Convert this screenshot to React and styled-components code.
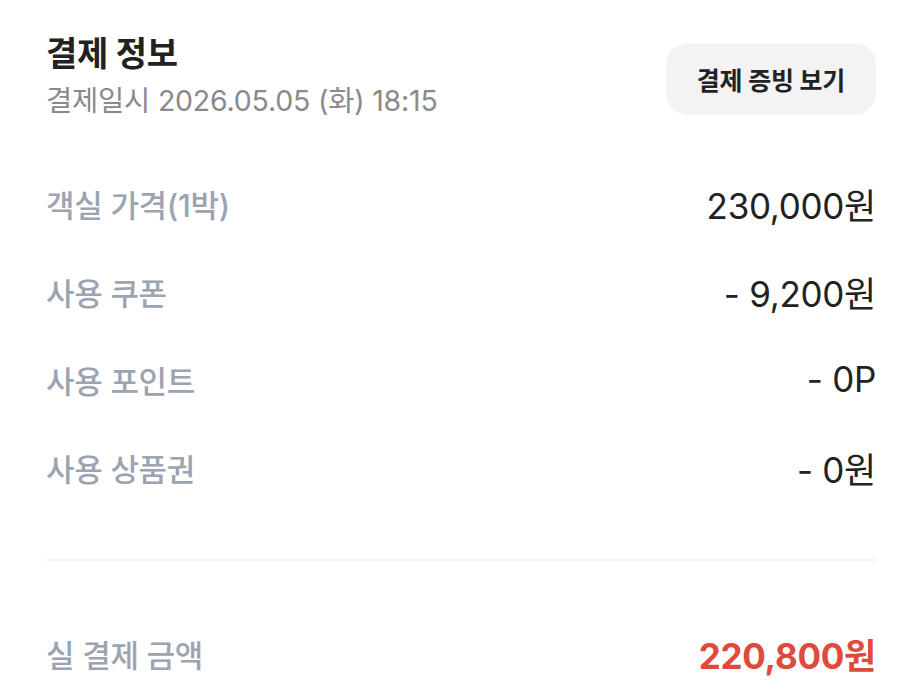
import React from "react";
import styled, { createGlobalStyle } from "styled-components";

const Global = createGlobalStyle`
  html, body { margin: 0; padding: 0; background: #fff; }
  body { font-family: "Inter", "Noto Sans CJK KR", sans-serif; -webkit-font-smoothing: antialiased; }
`;

const Page = styled.div`
  width: 900px;
  box-sizing: border-box;
  padding: 32px 24px 0 46px;
`;

const Header = styled.div`
  display: flex;
  justify-content: space-between;
  align-items: center;
`;

const TitleBlock = styled.div`
  display: flex;
  flex-direction: column;
  gap: 8px;
`;

const Title = styled.h1`
  margin: 0;
  font-size: 34px;
  line-height: 44px;
  font-weight: 700;
  color: #222;
  letter-spacing: -0.3px;
`;

const Sub = styled.div`
  font-size: 28.5px;
  line-height: 34px;
  color: #8a8a8a;
  font-weight: 400;
  letter-spacing: -0.2px;
`;

const Button = styled.button`
  height: 72px;
  margin-top: 8px;
  padding: 0 31px;
  border: none;
  border-radius: 22px;
  background: #f3f3f4;
  font-family: inherit;
  font-size: 25px;
  font-weight: 600;
  color: #222;
  letter-spacing: -0.3px;
  cursor: pointer;
`;

const Rows = styled.div`
  margin-top: 41px;
  display: flex;
  flex-direction: column;
`;

const Row = styled.div`
  display: flex;
  justify-content: space-between;
  align-items: center;
  height: 88px;
`;

const Label = styled.span`
  font-size: 31px;
  font-weight: 500;
  color: #9ba4b0;
  letter-spacing: -0.3px;
`;

const Value = styled.span`
  font-size: 35px;
  font-weight: ${(p) => (p.$accent ? 700 : 400)};
  color: ${(p) => (p.$accent ? "#e04a3c" : "#222")};
  letter-spacing: -0.3px;
`;

const Divider = styled.hr`
  margin: 48px 0;
  border: none;
  height: 2px;
  background: #f2f2f2;
`;

const items = [
  ["객실 가격(1박)", "230,000원"],
  ["사용 쿠폰", "- 9,200원"],
  ["사용 포인트", "- 0P"],
  ["사용 상품권", "- 0원"],
];

export default function App() {
  return (
    <>
      <Global />
      <Page>
        <Header>
          <TitleBlock>
            <Title>결제 정보</Title>
            <Sub>결제일시 2026.05.05 (화) 18:15</Sub>
          </TitleBlock>
          <Button>결제 증빙 보기</Button>
        </Header>
        <Rows>
          {items.map(([l, v]) => (
            <Row key={l}>
              <Label>{l}</Label>
              <Value>{v}</Value>
            </Row>
          ))}
        </Rows>
        <Divider />
        <Row>
          <Label>실 결제 금액</Label>
          <Value $accent>220,800원</Value>
        </Row>
      </Page>
    </>
  );
}
